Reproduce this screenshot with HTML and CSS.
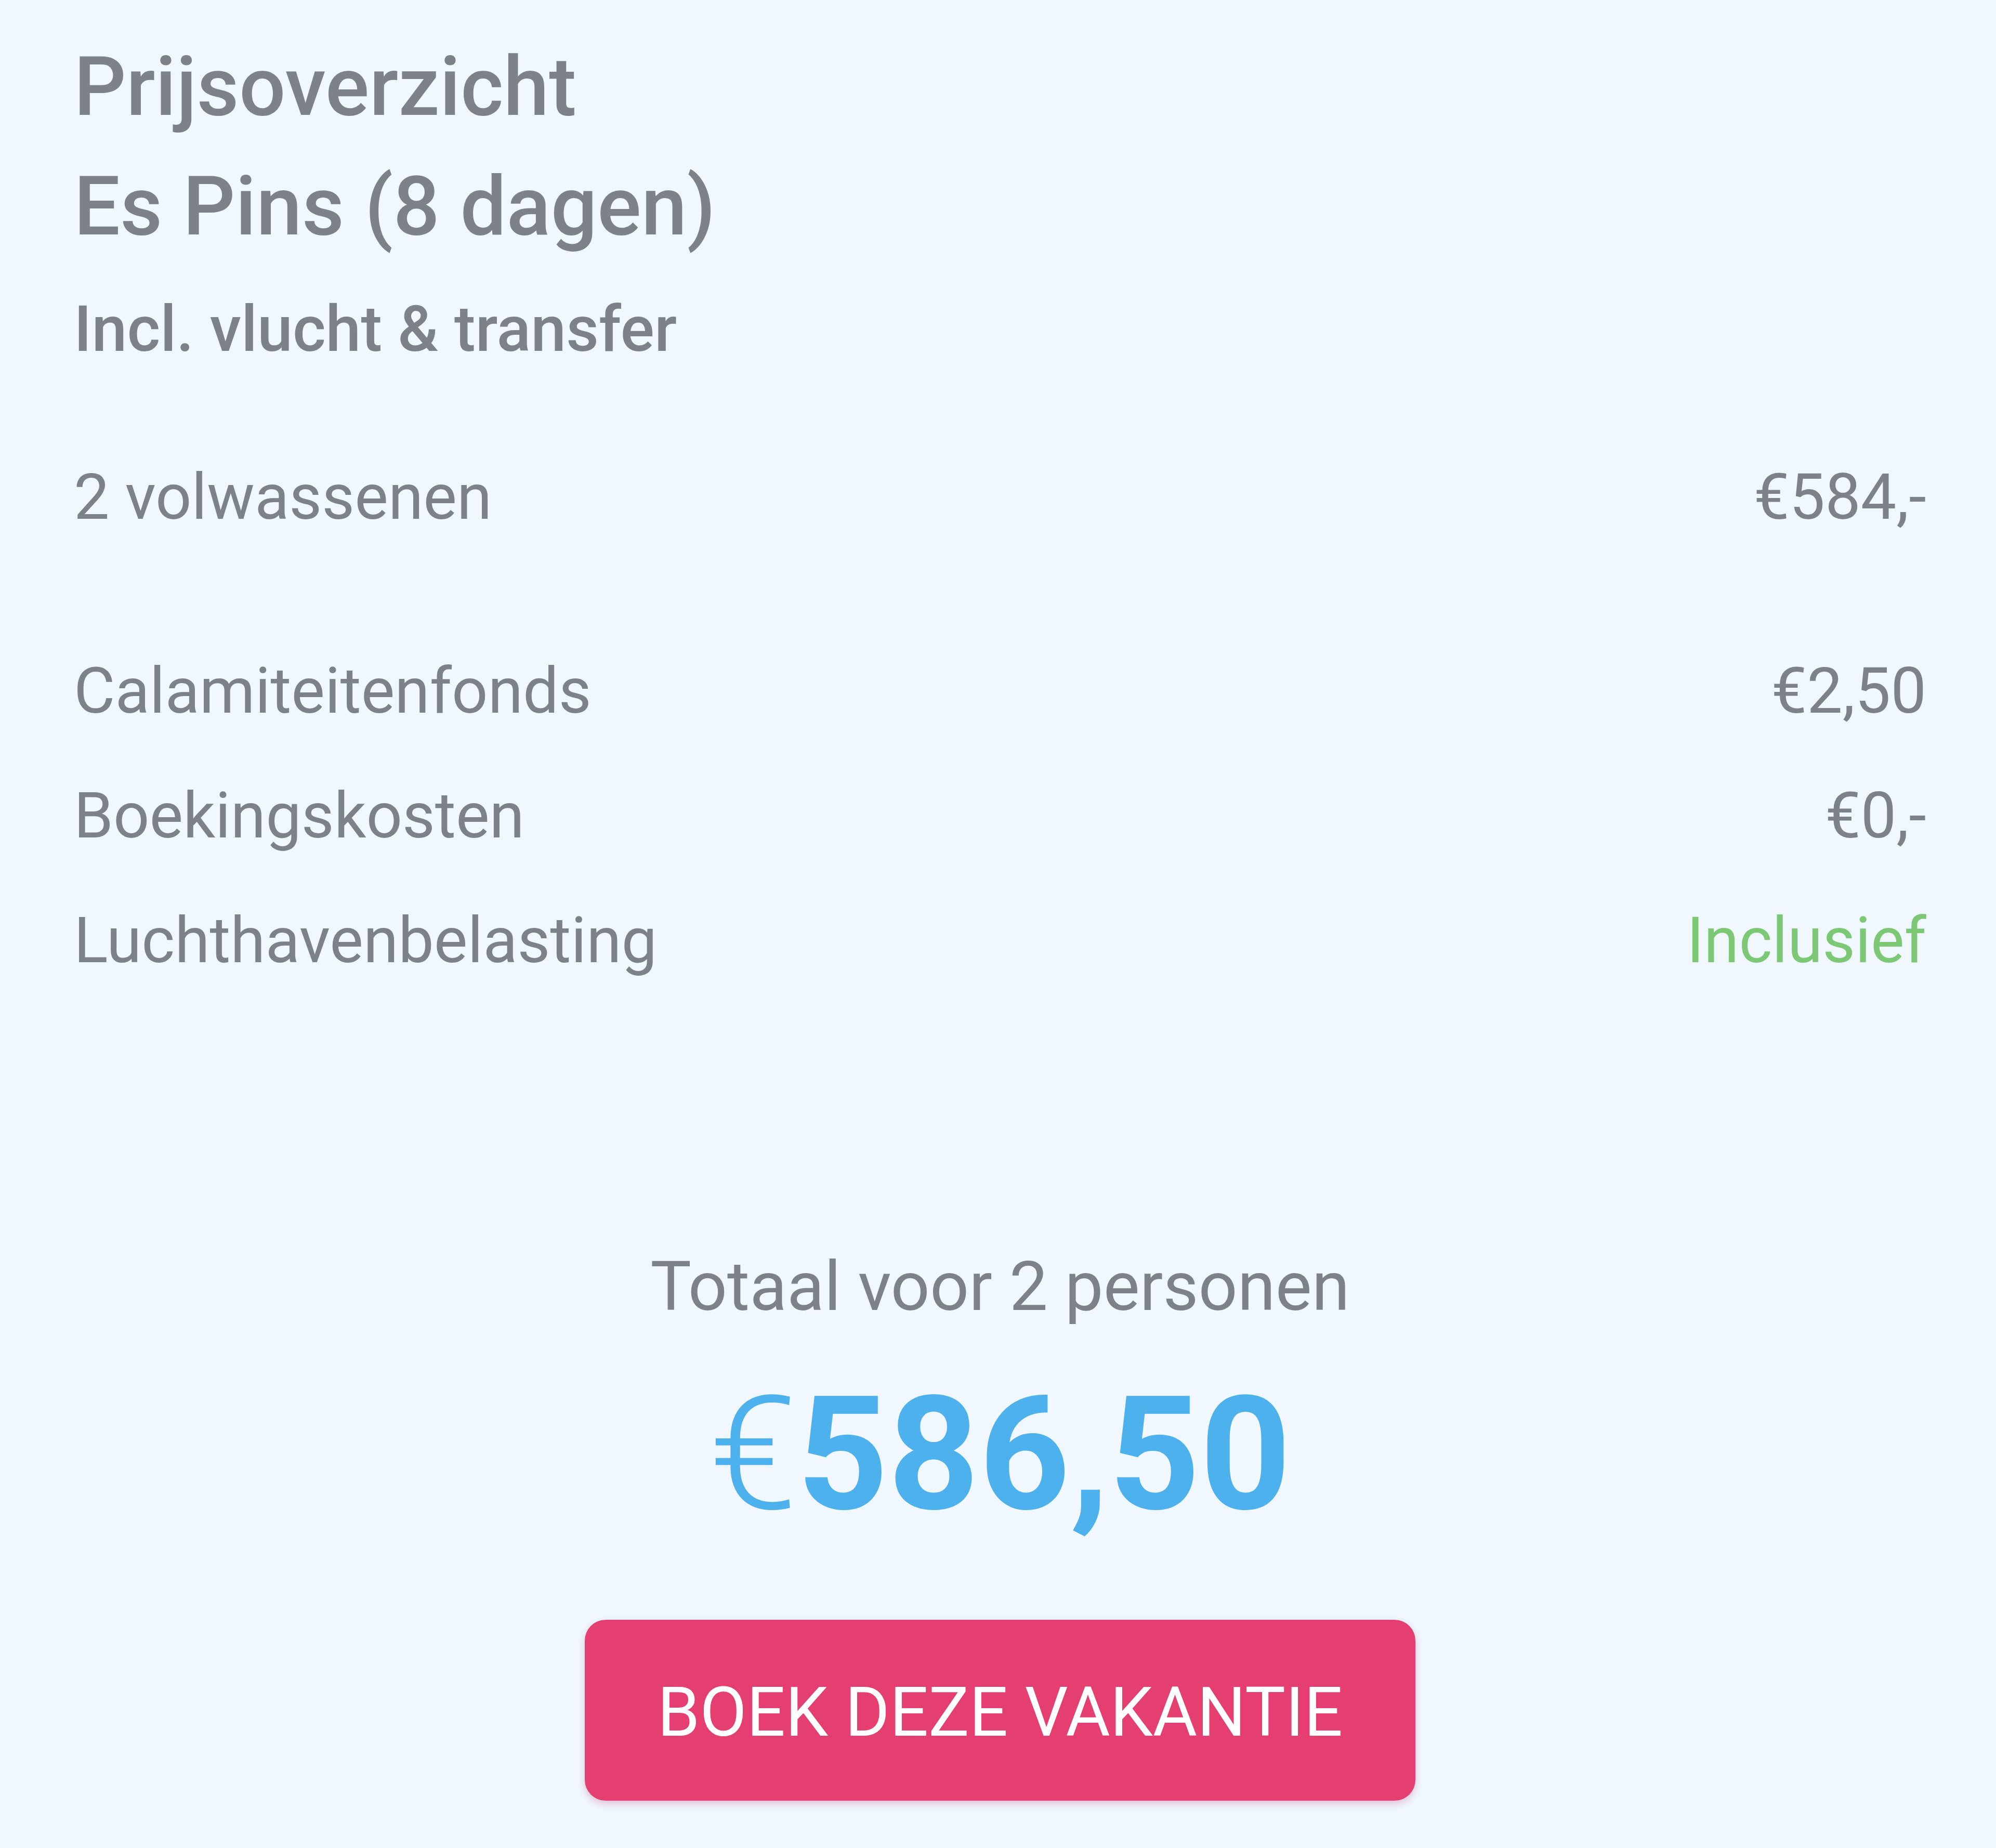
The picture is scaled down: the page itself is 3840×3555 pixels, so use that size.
FILE: index.html
```html
<!DOCTYPE html>
<html lang="nl">
<head>
    <meta charset="UTF-8">
    <meta name="viewport" content="width=device-width, initial-scale=1.0">
    <title>Prijsoverzicht</title>
    <link rel="stylesheet" href="styles.css">
</head>
<body>
    <div class="summary">
        <h1 class="title">Prijsoverzicht<br>Es Pins (8 dagen)</h1>
        <div class="subtitle">Incl. vlucht &amp; transfer</div>

        <div class="lines">
            <div class="line line-main">
                <span>2 volwassenen</span>
                <span>€584,-</span>
            </div>
            <div class="line">
                <span>Calamiteitenfonds</span>
                <span>€2,50</span>
            </div>
            <div class="line">
                <span>Boekingskosten</span>
                <span>€0,-</span>
            </div>
            <div class="line">
                <span>Luchthavenbelasting</span>
                <span class="included">Inclusief</span>
            </div>
        </div>

        <div class="total">
            <div class="total-label">Totaal voor 2 personen</div>
            <div class="total-price"><span class="currency">€</span>586,50</div>
            <button class="btn-book">BOEK DEZE VAKANTIE</button>
        </div>
    </div>
</body>
</html>
```

FILE: styles.css
```css
* {
    margin: 0;
    padding: 0;
    box-sizing: border-box;
}

body {
    font-family: Roboto, 'Noto Sans', sans-serif;
    background: #f0f7fe;
    color: #7d828a;
}

.summary {
    padding: 52px 134px 90px 142px;
}

.title {
    font-size: 158px;
    font-weight: 500;
    line-height: 230px;
}

.subtitle {
    margin-top: 34px;
    font-size: 122px;
    font-weight: 500;
    line-height: 175px;
}

.lines {
    margin-top: 116px;
}

.line {
    display: flex;
    justify-content: space-between;
    font-size: 122px;
    line-height: 240px;
}

.line-main {
    margin-bottom: 133px;
}

.included {
    color: #7dc874;
}

.total {
    margin-top: 456px;
    display: flex;
    flex-direction: column;
    align-items: center;
}

.total-label {
    font-size: 132px;
    line-height: 178px;
}

.total-price {
    margin-top: 66px;
    font-size: 305px;
    font-weight: 700;
    line-height: 335px;
    color: #4cb1ec;
}

.currency {
    font-weight: 300;
}

.btn-book {
    margin-top: 151px;
    width: 1598px;
    height: 348px;
    border: none;
    border-radius: 40px;
    background: #e53f72;
    color: #fff;
    font-family: Roboto, sans-serif;
    font-size: 131px;
    font-weight: 400;
    padding-top: 8px;
    box-shadow: 0 6px 14px rgba(180, 40, 90, 0.25);
}
```
